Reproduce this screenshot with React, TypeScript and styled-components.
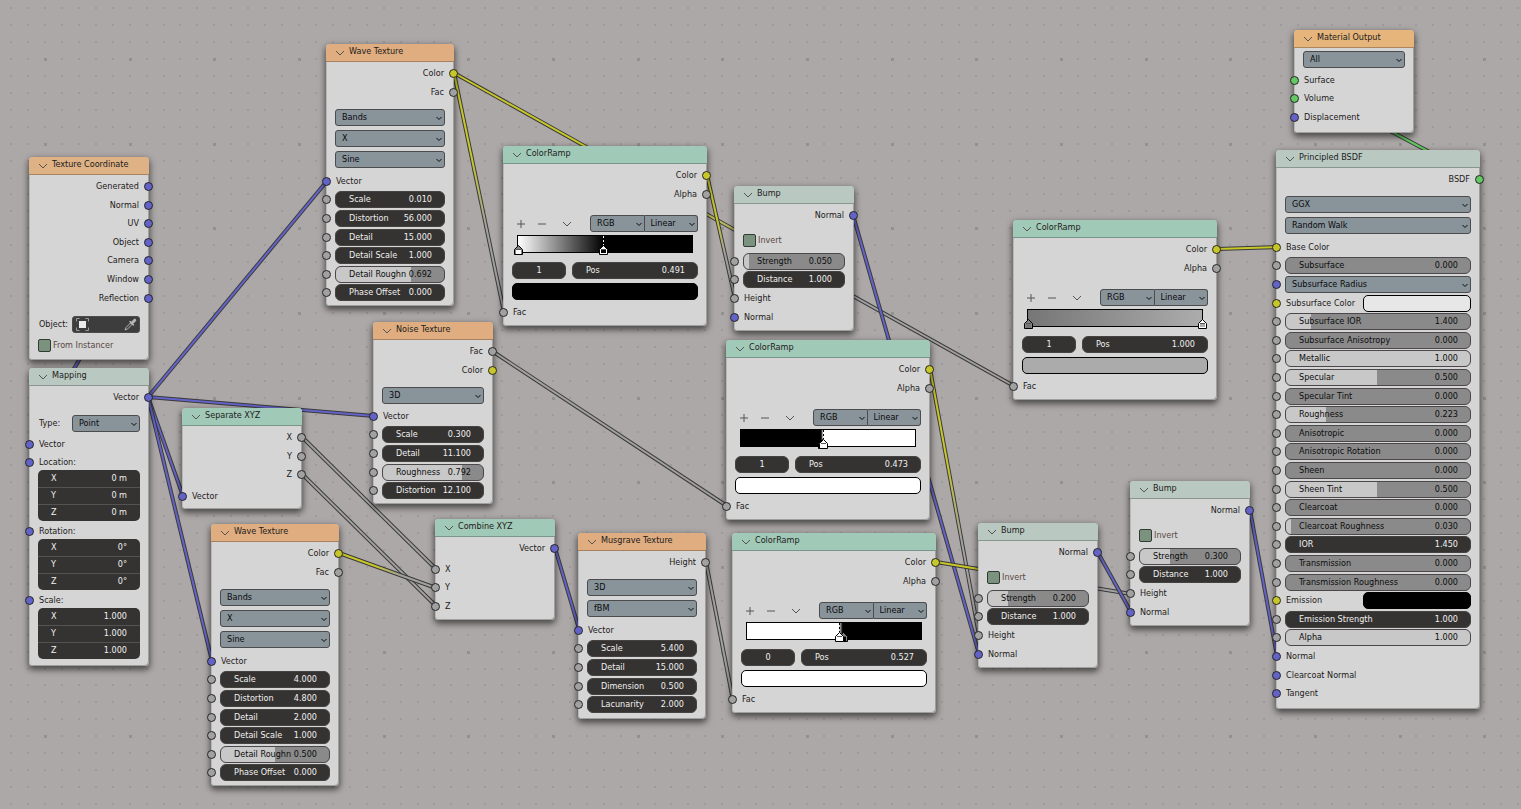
import React from "react";
import styled, { createGlobalStyle, css } from "styled-components";

const GlobalStyle = createGlobalStyle`
  *, *::before, *::after { box-sizing: border-box; }
  body { margin: 0; background: #aca8a7; }
  body, button, input, select {
    font-family: "DejaVu Sans Condensed", "DejaVu Sans", sans-serif;
    font-size: 9px;
    line-height: 15px;
  }
  button, input, select { margin: 0; padding: 0; border: 0; color: inherit; background: none; border-radius: 0; }
`;

/* ---------- palette ---------- */

const SOCKET = {
  vector: "#6363c7",
  value: "#a1a1a1",
  color: "#c7c729",
  shader: "#63c763",
} as const;
type SocketType = keyof typeof SOCKET;

const HEADER = {
  input: "#deb285",
  texture: "#dfad7f",
  output: "#e6b57c",
  converter: "#a1c9b7",
  vector: "#b9c9c1",
} as const;
type HeaderType = keyof typeof HEADER;

/* ---------- canvas ---------- */

const Canvas = styled.main`
  position: relative;
  min-height: 100vh;
  overflow: hidden;
  background: #aca8a7;
  color: #222020;
`;

const Layer = styled.svg`
  position: absolute;
  top: 0;
  left: 0;
  width: 100%;
  height: 100%;
`;

const GRID_MAJOR = 84.66;

function dotPaths() {
  const step = GRID_MAJOR / 5;
  let minor = "";
  let major = "";
  for (let i = -2; i < 150; i++) {
    for (let j = -3; j < 90; j++) {
      const x = Math.round(45 + i * step);
      const y = Math.round(59 + j * step);
      if (i % 5 === 0 && j % 5 === 0) major += `M${x - 1} ${y - 1}h3v3h-3z`;
      else minor += `M${x - 1} ${y - 1}h2v2h-2z`;
    }
  }
  return { minor, major };
}
const DOTS = dotPaths();

type Link = [number, number, number, number, SocketType, SocketType];
const LINKS: Link[] = [
  [148, 242, 30, 444, "vector", "vector"],
  [148, 397, 327, 181, "vector", "vector"],
  [148, 397, 374, 416, "vector", "vector"],
  [148, 397, 183, 496, "vector", "vector"],
  [148, 397, 212, 661, "vector", "vector"],
  [454, 73, 504, 312, "color", "value"],
  [454, 73, 1014, 386, "color", "value"],
  [707, 175, 735, 298, "color", "value"],
  [853, 215, 979, 654, "vector", "vector"],
  [930, 369, 979, 635, "color", "value"],
  [936, 562, 1131, 594, "color", "value"],
  [492, 351, 727, 506, "value", "value"],
  [302, 437, 436, 569, "value", "value"],
  [302, 474, 436, 606, "value", "value"],
  [339, 553, 436, 588, "color", "value"],
  [555, 548, 579, 629, "vector", "vector"],
  [706, 562, 733, 700, "value", "value"],
  [1097, 551, 1131, 612, "vector", "vector"],
  [1250, 510, 1277, 656, "vector", "vector"],
  [1217, 249, 1277, 247, "color", "color"],
  [1480, 179, 1295, 80, "shader", "shader"],
];

const Links = () => (
  <Layer aria-hidden="true">
    <path d={DOTS.minor} fill="#9d9a99" />
    <path d={DOTS.major} fill="#919190" />
    {LINKS.map(([x1, y1, x2, y2, from, to], i) => (
      <g key={i}>
        <linearGradient id={`link${i}`} gradientUnits="userSpaceOnUse" x1={x1} y1={y1} x2={x2} y2={y2}>
          <stop offset="0.35" stopColor={SOCKET[from]} />
          <stop offset="0.65" stopColor={SOCKET[to]} />
        </linearGradient>
        <path d={`M${x1} ${y1}L${x2} ${y2}`} stroke="#3a3939" strokeWidth="4" />
        <path d={`M${x1} ${y1}L${x2} ${y2}`} stroke={`url(#link${i})`} strokeWidth="2" />
      </g>
    ))}
  </Layer>
);

/* ---------- node frame ---------- */

const Frame = styled.section<{ $x: number; $y: number; $w: number; $foot: number }>`
  position: absolute;
  left: ${(p) => p.$x}px;
  top: ${(p) => p.$y}px;
  width: ${(p) => p.$w}px;
  padding-bottom: ${(p) => p.$foot}px;
  border-radius: 4px;
  background: #d5d5d5;
  box-shadow: inset -1px -1px 0 #a09f9f, inset 1px 0 0 #b9b8b8, 0 3px 6px 1px rgba(0, 0, 0, 0.55);
`;

const Header = styled.header<{ $kind: HeaderType }>`
  display: flex;
  align-items: center;
  height: 18px;
  padding-left: 9px;
  border-radius: 4px 4px 0 0;
  border-bottom: 1px solid rgba(0, 0, 0, 0.25);
  background: ${(p) => HEADER[p.$kind]};
`;

const Collapse = styled.button`
  display: flex;
  width: 14px;
`;

const Title = styled.h2`
  margin: 0;
  padding-bottom: 2px;
  font-size: 9px;
  font-weight: 400;
  line-height: 15px;
  white-space: nowrap;
`;

const Chevron = () => (
  <svg width="10" height="6" viewBox="0 0 10 6" fill="none" stroke="#55544f" aria-hidden="true">
    <path d="M1 1l4 4 4-4" />
  </svg>
);

interface NodeProps {
  x: number;
  y: number;
  w?: number;
  foot?: number;
  kind: HeaderType;
  title: string;
  children: React.ReactNode;
}
const Node = ({ x, y, w = 120, foot = 3, kind, title, children }: NodeProps) => (
  <Frame $x={x} $y={y} $w={w} $foot={foot} aria-label={title}>
    <Header $kind={kind}>
      <Collapse aria-label={`Collapse ${title}`}>
        <Chevron />
      </Collapse>
      <Title>{title}</Title>
    </Header>
    {children}
  </Frame>
);

/* ---------- groups of rows ---------- */

const group = css<{ $gap?: number }>`
  display: grid;
  align-items: start;
  padding: ${(p) => p.$gap ?? 0}px 9px 0;
`;
const Outputs = styled.div`
  ${group}
  padding-top: 3px;
  grid-auto-rows: 19px 18px 19px 18px 19px;
  justify-items: end;
`;
const Inputs = styled.div<{ $gap?: number }>`
  ${group}
  grid-auto-rows: 18px 19px 19px 18px 19px;
`;
const Options = styled.div<{ $gap?: number }>`
  ${group}
  grid-auto-rows: 21px;
`;

const Row = styled.div`
  position: relative;
  display: flex;
  align-items: center;
  height: 17px;
  min-width: 0;
`;

const Dot = styled.span<{ $type: SocketType; $side: "left" | "right" }>`
  position: absolute;
  top: 4px;
  ${(p) => p.$side}: -13px;
  width: 9px;
  height: 9px;
  border: 1px solid #262626;
  border-radius: 50%;
  background: ${(p) => SOCKET[p.$type]};
`;

const Name = styled.span`
  padding: 0 1px 1px;
  line-height: 16px;
  white-space: nowrap;
`;

const Out = ({ name, type }: { name: string; type: SocketType }) => (
  <Row>
    <Name>{name}</Name>
    <Dot $type={type} $side="right" />
  </Row>
);
const In = ({ name, type }: { name: string; type: SocketType }) => (
  <Row>
    <Name>{name}</Name>
    <Dot $type={type} $side="left" />
  </Row>
);

/* ---------- controls ---------- */

const FieldBox = styled.label<{ $slider?: boolean }>`
  flex: 1;
  display: flex;
  align-items: center;
  min-width: 0;
  height: 17px;
  padding: 0 12px 1px 13px;
  border: 1px solid ${(p) => (p.$slider ? "#4b474a" : "#444342")};
  border-radius: 6px;
  background: ${(p) => (p.$slider ? "#8a8a8a" : "#353331")};
  color: ${(p) => (p.$slider ? "#0c0c0c" : "#f0f0f0")};
  white-space: nowrap;
`;
const FieldInput = styled.input<{ $center?: boolean }>`
  flex: 1;
  width: 0;
  min-width: 0;
  height: 15px;
  text-align: ${(p) => (p.$center ? "center" : "right")};
  outline: 0;
`;

interface FieldProps {
  name: string;
  value: string;
  fill?: number;
}
const Field = ({ name, value, fill }: FieldProps) => (
  <FieldBox
    $slider={fill !== undefined}
    style={
      fill !== undefined
        ? { backgroundImage: `linear-gradient(90deg, #c8c8c8 ${fill * 100}%, transparent ${fill * 100}%)` }
        : undefined
    }
  >
    <span>{name}</span>
    <FieldInput defaultValue={value} />
  </FieldBox>
);
const Num = (props: FieldProps) => (
  <Row>
    <Dot $type="value" $side="left" />
    <Field {...props} />
  </Row>
);

const MenuWrap = styled.span<{ $join?: "left" | "right" }>`
  position: relative;
  flex: 1;
  display: flex;
  min-width: 0;
  height: 17px;
  border: 1px solid #4c4b4d;
  border-left-width: ${(p) => (p.$join === "right" ? 0 : 1)}px;
  border-radius: ${(p) => (p.$join === "left" ? "3px 0 0 3px" : p.$join === "right" ? "0 3px 3px 0" : "3px")};
  background: #88939a;
`;
const MenuSelect = styled.select`
  appearance: none;
  flex: 1;
  min-width: 0;
  height: 15px;
  padding: 0 12px 1px 6px;
  color: #0a0a0a;
  outline: 0;
`;
const MenuArrow = styled.svg`
  position: absolute;
  right: 2px;
  top: 6px;
  pointer-events: none;
`;
const Menu = ({ value, label, join }: { value: string; label: string; join?: "left" | "right" }) => (
  <MenuWrap $join={join}>
    <MenuSelect aria-label={label} defaultValue={value}>
      <option>{value}</option>
    </MenuSelect>
    <MenuArrow width="6" height="5" viewBox="0 0 6 5" fill="none" stroke="#0a0a0a" aria-hidden="true">
      <path d="M.5 1L3 3.500 5.500 1" />
    </MenuArrow>
  </MenuWrap>
);

const CheckLabel = styled.label`
  display: flex;
  align-items: center;
  gap: 2px;
  color: #5a4742;
  white-space: nowrap;
`;
const CheckBox = styled.input`
  appearance: none;
  width: 13px;
  height: 13px;
  border: 1px solid #2f3b33;
  border-radius: 2px;
  background: #7b937e;
`;
const Check = ({ name }: { name: string }) => (
  <Row>
    <CheckLabel>
      <CheckBox type="checkbox" />
      {name}
    </CheckLabel>
  </Row>
);

const SwatchButton = styled.button<{ $color: string; $w?: number }>`
  width: ${(p) => (p.$w ? `${p.$w}px` : "100%")};
  height: 17px;
  margin-left: auto;
  border: 1px solid #000;
  border-radius: 5px;
  background: ${(p) => p.$color};
`;
const ColorIn = ({ name, color }: { name: string; color: string }) => (
  <Row>
    <Dot $type="color" $side="left" />
    <Name>{name}</Name>
    <SwatchButton $color={color} $w={108} aria-label={name} />
  </Row>
);

/* ---------- texture coordinate parts ---------- */

const Caption = styled.span`
  width: 34px;
  padding: 0 1px 1px;
  white-space: nowrap;
`;
const ObjectPicker = styled.button`
  flex: 1;
  display: flex;
  align-items: center;
  justify-content: space-between;
  height: 17px;
  padding: 0 2px 0 3px;
  border: 1px solid #4c4b4d;
  border-radius: 3px;
  background: #3d3d3d;
`;

/* ---------- mapping parts ---------- */

const AxisGroup = styled.fieldset`
  min-width: 0;
  margin: 0 9px 2px;
  padding: 0;
  border: 0;
  border-radius: 5px;
  background: #353331;
  color: #f0f0f0;
`;
const AxisRow = styled.label`
  display: flex;
  align-items: center;
  height: 17px;
  padding: 0 13px 1px;
  & + & { border-top: 1px solid #545353; }
`;
const VectorHead = styled.div`
  height: 16px;
  padding: 0 9px;
`;
const VectorBlock = ({ name, value }: { name: string; value: string }) => (
  <>
    <VectorHead>
      <In name={`${name}:`} type="vector" />
    </VectorHead>
    <AxisGroup aria-label={name}>
      {["X", "Y", "Z"].map((axis) => (
        <AxisRow key={axis}>
          <span>{axis}</span>
          <FieldInput defaultValue={value} />
        </AxisRow>
      ))}
    </AxisGroup>
  </>
);

/* ---------- color ramp ---------- */

const RampBody = styled.div`
  padding: 11px 9px 0;
`;
const RampTools = styled.div`
  display: flex;
  align-items: center;
  height: 17px;
  padding-left: 3px;
`;
const ToolButton = styled.button<{ $w: number }>`
  display: flex;
  align-items: center;
  width: ${(p) => p.$w}px;
  height: 17px;
`;
const MenuPair = styled.div`
  display: flex;
  width: 108px;
  margin-left: auto;
`;
const Gradient = styled.div<{ $css: string }>`
  position: relative;
  height: 18px;
  margin: 3px 5px 9px;
  border: 1px solid #000;
  background: linear-gradient(90deg, ${(p) => p.$css});
`;
const StopMarker = styled.svg`
  position: absolute;
  top: 0;
  margin-left: -4px;
`;
const StopRow = styled.div`
  display: grid;
  grid-template-columns: 54px 1fr;
  gap: 6px;
  margin-bottom: 4px;
`;
const IndexBox = styled(FieldBox)`
  padding: 0 6px 1px;
`;

interface Stop {
  at: number;
  color: string;
  active?: boolean;
  dash?: string;
}
const Marker = ({ at, color, active, dash = "#fff" }: Stop) => {
  const tip = active ? "#fff" : "#858585";
  return (
    <StopMarker width="9" height="20" viewBox="0 0 9 20" style={{ left: `${at * 100}%` }} aria-hidden="true">
      {active && <path d="M4.500 0V9" stroke={dash} strokeDasharray="2 2" />}
      <path d="M4.500 9.500L8.500 13.500V18.500H.5V13.500Z" fill={tip} stroke="#000" />
      <path d="M2 14H7V18H2Z" fill={color} />
      {active && <path d="M1.500 13.500H7.500V17.500H1.500Z" stroke="#fff" fill="none" />}
      <path d="M2 13.500H7" stroke="#555" />
    </StopMarker>
  );
};

interface RampProps {
  x: number;
  y: number;
  gradient: string;
  stops: Stop[];
  index: string;
  pos: string;
  color: string;
}
const ColorRamp = ({ x, y, gradient, stops, index, pos, color }: RampProps) => (
  <Node x={x} y={y} w={204} foot={4} kind="converter" title="ColorRamp">
    <Outputs>
      <Out name="Color" type="color" />
      <Out name="Alpha" type="value" />
    </Outputs>
    <RampBody>
      <RampTools>
        <ToolButton $w={21} aria-label="Add stop">
          <svg width="12" height="12" viewBox="0 0 12 12" stroke="#555"><path d="M6 2v8M2 6h8" /></svg>
        </ToolButton>
        <ToolButton $w={26} aria-label="Remove stop">
          <svg width="12" height="12" viewBox="0 0 12 12" stroke="#555"><path d="M2 6h8" /></svg>
        </ToolButton>
        <ToolButton $w={14} aria-label="Ramp tools">
          <Chevron />
        </ToolButton>
        <MenuPair>
          <Menu label="Color mode" value="RGB" join="left" />
          <Menu label="Interpolation" value="Linear" join="right" />
        </MenuPair>
      </RampTools>
      <Gradient $css={gradient}>
        {stops.map((s, i) => (
          <Marker key={i} {...s} />
        ))}
      </Gradient>
      <StopRow>
        <IndexBox>
          <FieldInput $center aria-label="Active stop" defaultValue={index} />
        </IndexBox>
        <Field name="Pos" value={pos} />
      </StopRow>
      <Row>
        <SwatchButton $color={color} aria-label="Stop color" />
      </Row>
    </RampBody>
    <Inputs $gap={4}>
      <In name="Fac" type="value" />
    </Inputs>
  </Node>
);

/* ---------- other repeated nodes ---------- */

const WaveTexture = ({ x, y, values }: { x: number; y: number; values: string[] }) => (
  <Node x={x} y={y} w={128} kind="texture" title="Wave Texture">
    <Outputs>
      <Out name="Color" type="color" />
      <Out name="Fac" type="value" />
    </Outputs>
    <Options $gap={7}>
      <Menu label="Wave type" value="Bands" />
      <Menu label="Direction" value="X" />
      <Menu label="Profile" value="Sine" />
    </Options>
    <Inputs $gap={1}>
      <In name="Vector" type="vector" />
      <Num name="Scale" value={values[0]} />
      <Num name="Distortion" value={values[1]} />
      <Num name="Detail" value={values[2]} />
      <Num name="Detail Scale" value={values[3]} />
      <Num name="Detail Roughn" value={values[4]} fill={Number(values[4])} />
      <Num name="Phase Offset" value={values[5]} />
    </Inputs>
  </Node>
);

const Bump = ({ x, y, strength }: { x: number; y: number; strength: string }) => (
  <Node x={x} y={y} foot={4} kind="vector" title="Bump">
    <Outputs>
      <Out name="Normal" type="vector" />
    </Outputs>
    <Options $gap={6}>
      <Check name="Invert" />
    </Options>
    <Inputs>
      <Num name="Strength" value={strength} fill={Number(strength)} />
      <Num name="Distance" value="1.000" />
      <In name="Height" type="value" />
      <In name="Normal" type="vector" />
    </Inputs>
  </Node>
);

export default function App() {
  return (
    <>
      <GlobalStyle />
      <Canvas>
        <Links />

        <Node x={29} y={157} foot={2} kind="input" title="Texture Coordinate">
          <Outputs>
            {["Generated", "Normal", "UV", "Object", "Camera", "Window", "Reflection"].map((n) => (
              <Out key={n} name={n} type="vector" />
            ))}
          </Outputs>
          <Options $gap={8}>
            <Row>
              <Caption>Object:</Caption>
              <ObjectPicker aria-label="Object">
                <svg width="13" height="13" viewBox="0 0 13 13" fill="none" stroke="#9a9a9a" aria-hidden="true">
                  <path d="M.5 3.500V.5H3.500M9.500.5H12.500V3.500M12.500 9.500V12.500H9.500M3.500 12.500H.5V9.500" />
                  <path d="M3 3H10V10H3Z" fill="#ececec" stroke="none" />
                </svg>
                <svg width="13" height="13" viewBox="0 0 13 13" fill="none" aria-hidden="true">
                  <path d="M1 12L2 9.500 6.500 5 8 6.500 3.500 11Z" stroke="#b5b5b5" />
                  <path d="M6 3.500L9.500 7" stroke="#b5b5b5" strokeWidth="1.500" strokeLinecap="round" />
                  <path d="M8 5L10.800 2.200" stroke="#b5b5b5" strokeWidth="3" strokeLinecap="round" />
                </svg>
              </ObjectPicker>
            </Row>
            <Check name="From Instancer" />
          </Options>
        </Node>

        <Node x={29} y={368} foot={5} kind="vector" title="Mapping">
          <Outputs>
            <Out name="Vector" type="vector" />
          </Outputs>
          <Options $gap={7}>
            <Row>
              <Caption>Type:</Caption>
              <Menu label="Type" value="Point" />
            </Row>
          </Options>
          <Inputs>
            <In name="Vector" type="vector" />
          </Inputs>
          <VectorBlock name="Location" value="0 m" />
          <VectorBlock name="Rotation" value="0°" />
          <VectorBlock name="Scale" value="1.000" />
        </Node>

        <Node x={182} y={408} kind="converter" title="Separate XYZ">
          <Outputs>
            <Out name="X" type="value" />
            <Out name="Y" type="value" />
            <Out name="Z" type="value" />
          </Outputs>
          <Inputs $gap={3}>
            <In name="Vector" type="vector" />
          </Inputs>
        </Node>

        <WaveTexture x={326} y={44} values={["0.010", "56.000", "15.000", "1.000", "0.692", "0.000"]} />
        <WaveTexture x={211} y={524} values={["4.000", "4.800", "2.000", "1.000", "0.500", "0.000"]} />

        <Node x={373} y={322} kind="texture" title="Noise Texture">
          <Outputs>
            <Out name="Fac" type="value" />
            <Out name="Color" type="color" />
          </Outputs>
          <Options $gap={7}>
            <Menu label="Dimensions" value="3D" />
          </Options>
          <Inputs>
            <In name="Vector" type="vector" />
            <Num name="Scale" value="0.300" />
            <Num name="Detail" value="11.100" />
            <Num name="Roughness" value="0.792" fill={0.792} />
            <Num name="Distortion" value="12.100" />
          </Inputs>
        </Node>

        <Node x={435} y={519} kind="converter" title="Combine XYZ">
          <Outputs>
            <Out name="Vector" type="vector" />
          </Outputs>
          <Inputs $gap={2}>
            <In name="X" type="value" />
            <In name="Y" type="value" />
            <In name="Z" type="value" />
          </Inputs>
        </Node>

        <Node x={578} y={533} w={128} foot={4} kind="texture" title="Musgrave Texture">
          <Outputs>
            <Out name="Height" type="value" />
          </Outputs>
          <Options $gap={6}>
            <Menu label="Dimensions" value="3D" />
            <Menu label="Type" value="fBM" />
          </Options>
          <Inputs $gap={1}>
            <In name="Vector" type="vector" />
            <Num name="Scale" value="5.400" />
            <Num name="Detail" value="15.000" />
            <Num name="Dimension" value="0.500" />
            <Num name="Lacunarity" value="2.000" />
          </Inputs>
        </Node>

        <ColorRamp
          x={503}
          y={146}
          gradient="#fff 0%, #000 49.1%"
          stops={[
            { at: 0, color: "#fff" },
            { at: 0.491, color: "#000", active: true },
          ]}
          index="1"
          pos="0.491"
          color="#000"
        />
        <Bump x={734} y={186} strength="0.050" />
        <ColorRamp
          x={726}
          y={340}
          gradient="#000 46%, #fff 47.3%"
          stops={[
            { at: 0.465, color: "#000" },
            { at: 0.473, color: "#fff", active: true, dash: "#000" },
          ]}
          index="1"
          pos="0.473"
          color="#fff"
        />
        <ColorRamp
          x={732}
          y={533}
          gradient="#fff 52.7%, #000 55%"
          stops={[
            { at: 0.55, color: "#000" },
            { at: 0.527, color: "#fff", active: true, dash: "#000" },
          ]}
          index="0"
          pos="0.527"
          color="#fff"
        />
        <Bump x={978} y={523} strength="0.200" />
        <ColorRamp
          x={1013}
          y={220}
          gradient="#767676 0%, #acacac 100%"
          stops={[
            { at: 0, color: "#767676" },
            { at: 1, color: "#acacac", active: true, dash: "#000" },
          ]}
          index="1"
          pos="1.000"
          color="#ababab"
        />
        <Bump x={1130} y={481} strength="0.300" />

        <Node x={1294} y={30} foot={5} kind="output" title="Material Output">
          <Options $gap={3}>
            <Menu label="Target" value="All" />
          </Options>
          <Inputs>
            <In name="Surface" type="shader" />
            <In name="Volume" type="shader" />
            <In name="Displacement" type="vector" />
          </Inputs>
        </Node>

        <Node x={1276} y={150} w={204} foot={5} kind="vector" title="Principled BSDF">
          <Outputs>
            <Out name="BSDF" type="shader" />
          </Outputs>
          <Options $gap={6}>
            <Menu label="Distribution" value="GGX" />
            <Menu label="Subsurface method" value="Random Walk" />
          </Options>
          <Inputs $gap={1}>
            <In name="Base Color" type="color" />
            <Num name="Subsurface" value="0.000" fill={0} />
            <Row>
              <Dot $type="vector" $side="left" />
              <Menu label="Subsurface Radius" value="Subsurface Radius" />
            </Row>
            <ColorIn name="Subsurface Color" color="#e7e7e7" />
            <Num name="Subsurface IOR" value="1.400" fill={0.135} />
            <Num name="Subsurface Anisotropy" value="0.000" fill={0} />
            <Num name="Metallic" value="1.000" fill={1} />
            <Num name="Specular" value="0.500" fill={0.495} />
            <Num name="Specular Tint" value="0.000" fill={0} />
            <Num name="Roughness" value="0.223" fill={0.215} />
            <Num name="Anisotropic" value="0.000" fill={0} />
            <Num name="Anisotropic Rotation" value="0.000" fill={0} />
            <Num name="Sheen" value="0.000" fill={0} />
            <Num name="Sheen Tint" value="0.500" fill={0.495} />
            <Num name="Clearcoat" value="0.000" fill={0} />
            <Num name="Clearcoat Roughness" value="0.030" fill={0.025} />
            <Num name="IOR" value="1.450" />
            <Num name="Transmission" value="0.000" fill={0} />
            <Num name="Transmission Roughness" value="0.000" fill={0} />
            <ColorIn name="Emission" color="#000" />
            <Num name="Emission Strength" value="1.000" />
            <Num name="Alpha" value="1.000" fill={1} />
            <In name="Normal" type="vector" />
            <In name="Clearcoat Normal" type="vector" />
            <In name="Tangent" type="vector" />
          </Inputs>
        </Node>
      </Canvas>
    </>
  );
}
